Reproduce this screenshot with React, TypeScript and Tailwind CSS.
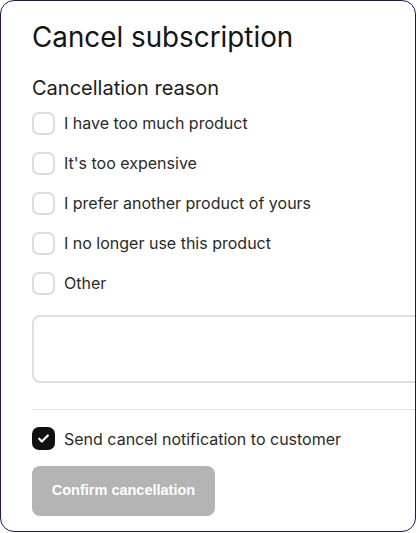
import React from 'react';

const reasons = [
  'I have too much product',
  "It's too expensive",
  'I prefer another product of yours',
  'I no longer use this product',
  'Other',
];

export default function App() {
  return (
    <div className="h-[533px] w-[417px] bg-white font-['Inter',sans-serif]">
      <div className="h-[532px] w-[416px] overflow-hidden rounded-[14px] border border-[#2b1250] bg-white pl-[31px] pt-[19px]">
        <h1 className="text-[27.8px] leading-[34px] text-[#141414]">Cancel subscription</h1>

        <h2 className="mt-[22px] text-[20px] leading-[24px] text-[#1c1c1c]">Cancellation reason</h2>

        <div className="mt-[3px] flex flex-col">
          {reasons.map((r) => (
            <label key={r} className="flex h-[40px] items-center gap-[9px]">
              <span className="h-[23px] w-[23px] shrink-0 rounded-[7px] border-2 border-[#dcdcdc] bg-white" />
              <span className="text-[16px] leading-[20px] text-[#2a2a2a]">{r}</span>
            </label>
          ))}
        </div>

        <div className="mt-[12px] h-[68px] w-[420px] rounded-[8px] border-2 border-[#dedede]" />

        <div className="mt-[26px] h-px w-[420px] bg-[#e3e3e3]" />

        <label className="mt-[17px] flex h-[23px] items-center gap-[9px]">
          <span className="flex h-[23px] w-[23px] shrink-0 items-center justify-center rounded-[7px] bg-[#111111]">
            <svg width="13" height="13" viewBox="0 0 24 24" fill="none" stroke="white" strokeWidth="4" strokeLinecap="round" strokeLinejoin="round">
              <path d="M4 12.5l5 5L20 6.5" />
            </svg>
          </span>
          <span className="text-[16px] leading-[20px] text-[#2a2a2a]">Send cancel notification to customer</span>
        </label>

        <button className="mt-[16px] flex h-[50px] w-[183px] items-center justify-center rounded-[8px] bg-[#b4b4b4] font-['Liberation_Sans',sans-serif] text-[14.5px] font-bold text-white">
          Confirm cancellation
        </button>
      </div>
    </div>
  );
}
